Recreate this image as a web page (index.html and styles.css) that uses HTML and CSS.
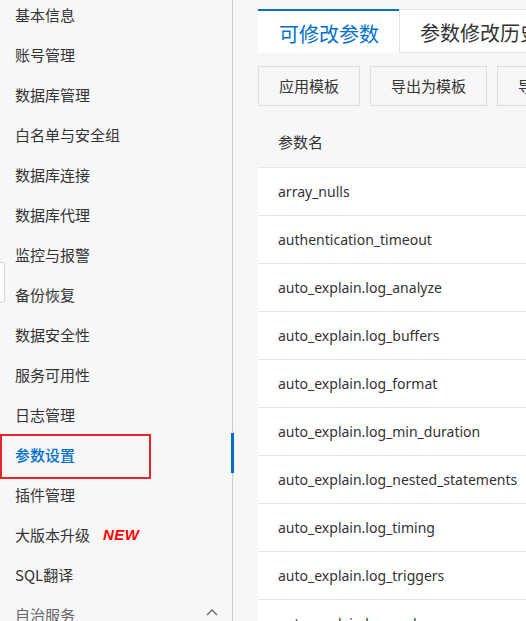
FILE: index.html
```html
<!DOCTYPE html>
<html lang="zh-CN">
<head>
<meta charset="utf-8">
<title>参数设置</title>
<link rel="stylesheet" href="styles.css">
</head>
<body>
<div class="page">
  <aside class="sidebar">
    <div class="edge-toggle"></div>
    <ul class="menu">
      <li class="item">基本信息</li>
      <li class="item">账号管理</li>
      <li class="item">数据库管理</li>
      <li class="item">白名单与安全组</li>
      <li class="item">数据库连接</li>
      <li class="item">数据库代理</li>
      <li class="item">监控与报警</li>
      <li class="item">备份恢复</li>
      <li class="item">数据安全性</li>
      <li class="item">服务可用性</li>
      <li class="item">日志管理</li>
      <li class="item active">参数设置<span class="bar"></span><span class="highlight"></span></li>
      <li class="item">插件管理</li>
      <li class="item">大版本升级<span class="new">NEW</span></li>
      <li class="item">SQL翻译</li>
      <li class="item group">自治服务<svg class="chev" width="12" height="8" viewBox="0 0 12 8"><path d="M1 7 L6 2 L11 7" fill="none" stroke="#666" stroke-width="1.3"/></svg></li>
    </ul>
  </aside>
  <main class="content">
    <div class="tabs">
      <div class="tab tab-active">可修改参数</div>
      <div class="tab">参数修改历史</div>
    </div>
    <div class="actions">
      <button class="btn">应用模板</button>
      <button class="btn">导出为模板</button>
      <button class="btn">导入参数</button>
    </div>
    <div class="table">
      <div class="row head">参数名</div>
      <div class="row">array_nulls</div>
      <div class="row">authentication_timeout</div>
      <div class="row">auto_explain.log_analyze</div>
      <div class="row">auto_explain.log_buffers</div>
      <div class="row">auto_explain.log_format</div>
      <div class="row">auto_explain.log_min_duration</div>
      <div class="row">auto_explain.log_nested_statements</div>
      <div class="row">auto_explain.log_timing</div>
      <div class="row">auto_explain.log_triggers</div>
      <div class="row">auto_explain.log_verbose</div>
    </div>
  </main>
</div>
</body>
</html>
```

FILE: styles.css
```css
html, body {
  margin: 0;
  padding: 0;
  height: 100%;
  overflow: hidden;
}
body {
  background: #f7f7f7;
  font-family: "Noto Sans", "Noto Sans CJK SC", sans-serif;
  color: #333;
}
.page {
  display: flex;
  height: 621px;
  overflow: hidden;
}
.sidebar {
  position: relative;
  width: 232px;
  flex: 0 0 232px;
  border-right: 1px solid #c9ccd2;
  background: #f7f7f7;
}
.edge-toggle {
  position: absolute;
  left: -1px;
  top: 262px;
  width: 4px;
  height: 39px;
  background: #fff;
  border: 1px solid #d4d4d4;
  border-radius: 0 3px 3px 0;
}
.menu {
  list-style: none;
  margin: -6px 0 0 0;
  padding: 0;
}
.item {
  position: relative;
  display: flex;
  align-items: center;
  height: 40px;
  padding-left: 15px;
  font-size: 15px;
  font-family: "Noto Sans CJK SC", sans-serif;
  color: #333;
}
.item.active {
  color: #0070cc;
  font-weight: 500;
}
.bar {
  position: absolute;
  right: -2px;
  top: -1px;
  width: 3px;
  height: 40px;
  background: #0070cc;
}
.highlight {
  position: absolute;
  left: 0;
  top: 0;
  width: 147px;
  height: 41px;
  border: 2px solid #e8262a;
}
.new {
  margin-left: 13px;
  color: #ff0000;
  font-family: "Liberation Sans", sans-serif;
  font-weight: bold;
  font-style: italic;
  font-size: 15px;
  letter-spacing: 0.5px;
}
.group {
  color: #666;
  justify-content: space-between;
  padding-right: 14px;
}
.chev {
  margin-top: -4px;
}
.content {
  flex: 1;
  padding: 9px 0 0 25px;
  overflow: hidden;
}
.tabs {
  display: flex;
  height: 44px;
}
.tab {
  flex: 0 0 auto;
  display: flex;
  align-items: center;
  padding: 2px 20px 0;
  font-size: 20px;
  font-family: "Noto Sans CJK SC", sans-serif;
  color: #333;
  background: #fff;
  border: 1px solid #e3e3e3;
  white-space: nowrap;
  box-sizing: border-box;
}
.tab-active {
  width: 141px;
  padding-left: 21px;
  color: #0070cc;
  border: none;
  border-top: 2px solid #0070cc;
  background: #fff;
}
.actions {
  display: flex;
  gap: 10px;
  margin-top: 13px;
}
.btn {
  flex: 0 0 auto;
  height: 40px;
  padding: 0 20px 2px;
  font-size: 15px;
  font-family: "Noto Sans CJK SC", sans-serif;
  color: #333;
  background: #f7f7f7;
  border: 1px solid #dcdcdc;
  white-space: nowrap;
}
.table {
  margin-top: 12px;
  width: 400px;
}
.row {
  display: flex;
  align-items: center;
  height: 47px;
  padding-left: 20px;
  font-size: 14px;
  background: #fff;
  border-bottom: 1px solid #e6e6e6;
  white-space: nowrap;
}
.row.head {
  box-sizing: border-box;
  height: 50px;
  padding-bottom: 2px;
  background: #f7f7f7;
  font-family: "Noto Sans CJK SC", sans-serif;
  font-size: 15px;
}
```
